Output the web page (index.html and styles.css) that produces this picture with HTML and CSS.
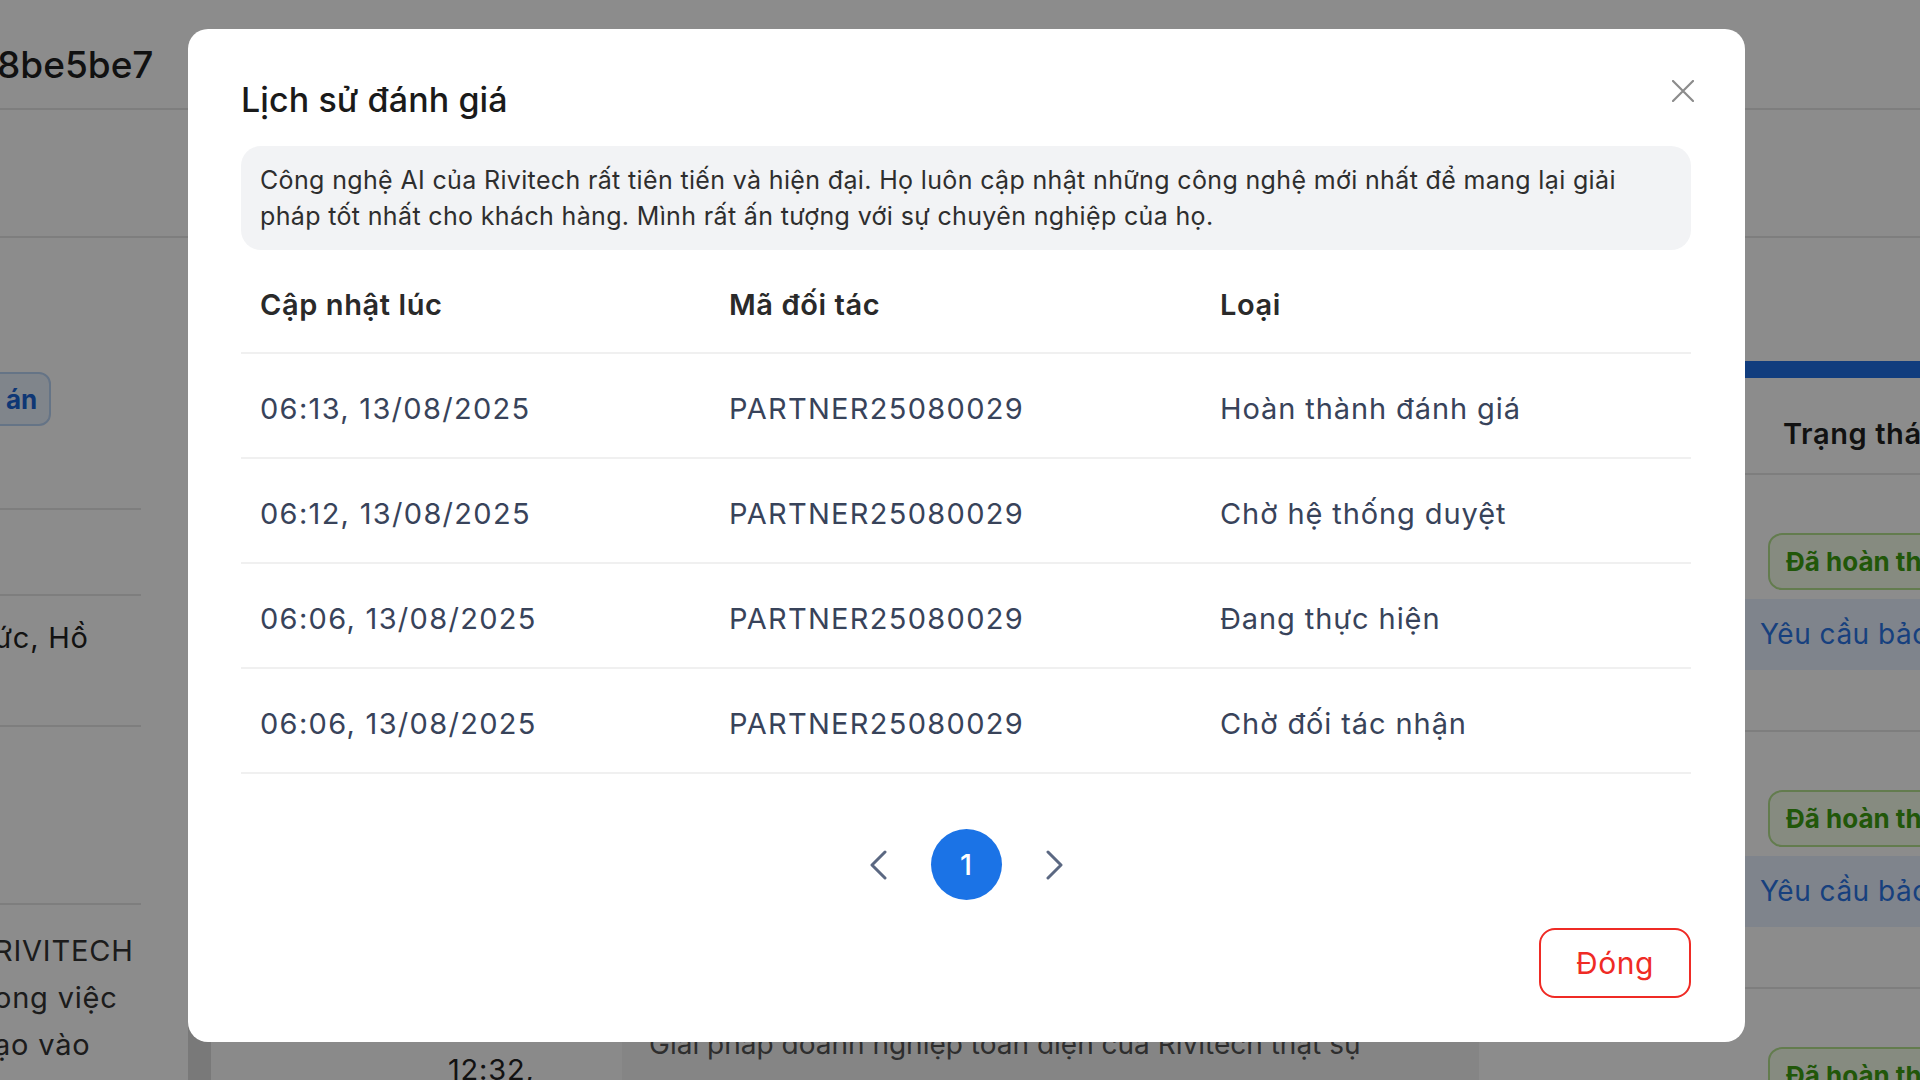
FILE: index.html
```html
<!DOCTYPE html>
<html lang="vi">
<head>
<meta charset="utf-8">
<title>Lịch sử đánh giá</title>
<link rel="stylesheet" href="styles.css">
</head>
<body>
<div class="page">
  <header class="topbar">
    <h1 class="order-id">8be5be7</h1>
  </header>
  <div class="subbar"></div>
  <div class="content">
    <aside class="left-panel">
      <div class="lp-row lp-row-1">
        <span class="pay-btn">án</span>
      </div>
      <div class="lp-row lp-row-2"></div>
      <div class="lp-row lp-row-3">ức, Hồ</div>
      <div class="lp-row lp-row-4"></div>
      <div class="lp-row lp-row-5">
        <p>RIVITECH</p>
        <p>ong việc</p>
        <p>ạo vào</p>
        <p>ược và</p>
      </div>
    </aside>
    <main class="main-card">
      <div class="mc-body"></div>
      <div class="mc-row">
        <div class="mc-edge"></div>
        <div class="mc-time">12:32,</div>
        <div class="mc-comment">Giải pháp doanh nghiệp toàn diện của Rivitech thật sự</div>
        <div class="mc-rest"></div>
      </div>
    </main>
    <aside class="right-panel">
      <div class="rp-tabbar"></div>
      <div class="rp-head">Trạng thái</div>
      <div class="rp-row">
        <span class="tag-done">Đã hoàn thành</span>
        <div class="rp-link">Yêu cầu bảo hành</div>
      </div>
      <div class="rp-row">
        <span class="tag-done">Đã hoàn thành</span>
        <div class="rp-link">Yêu cầu bảo hành</div>
      </div>
      <div class="rp-row">
        <span class="tag-done">Đã hoàn thành</span>
      </div>
    </aside>
  </div>
</div>

<div class="overlay">
  <section class="modal" role="dialog" aria-label="Lịch sử đánh giá">
    <button class="close-btn" aria-label="Đóng">
      <svg viewBox="0 0 22 22" width="22" height="22"><path d="M1 1 L21 21 M21 1 L1 21" stroke="#8c8c8c" stroke-width="2.2" fill="none" stroke-linecap="round"/></svg>
    </button>
    <h2 class="modal-title">Lịch sử đánh giá</h2>
    <div class="review-box">Công nghệ AI của Rivitech rất tiên tiến và hiện đại. Họ luôn cập nhật những công nghệ mới nhất để mang lại giải pháp tốt nhất cho khách hàng. Mình rất ấn tượng với sự chuyên nghiệp của họ.</div>
    <div class="history-table">
      <div class="t-row t-head">
        <div class="t-cell">Cập nhật lúc</div>
        <div class="t-cell">Mã đối tác</div>
        <div class="t-cell">Loại</div>
      </div>
      <div class="t-row">
        <div class="t-cell">06:13, 13/08/2025</div>
        <div class="t-cell">PARTNER25080029</div>
        <div class="t-cell">Hoàn thành đánh giá</div>
      </div>
      <div class="t-row">
        <div class="t-cell">06:12, 13/08/2025</div>
        <div class="t-cell">PARTNER25080029</div>
        <div class="t-cell">Chờ hệ thống duyệt</div>
      </div>
      <div class="t-row">
        <div class="t-cell">06:06, 13/08/2025</div>
        <div class="t-cell">PARTNER25080029</div>
        <div class="t-cell">Đang thực hiện</div>
      </div>
      <div class="t-row">
        <div class="t-cell">06:06, 13/08/2025</div>
        <div class="t-cell">PARTNER25080029</div>
        <div class="t-cell">Chờ đối tác nhận</div>
      </div>
    </div>
    <nav class="pager">
      <button class="pg-arrow" aria-label="Trang trước">
        <svg viewBox="0 0 18 30" width="18" height="30"><path d="M16 2 L3 15 L16 28" stroke="#5b6882" stroke-width="3" fill="none" stroke-linecap="round" stroke-linejoin="round"/></svg>
      </button>
      <span class="pg-current">1</span>
      <button class="pg-arrow" aria-label="Trang sau">
        <svg viewBox="0 0 18 30" width="18" height="30"><path d="M2 2 L15 15 L2 28" stroke="#5b6882" stroke-width="3" fill="none" stroke-linecap="round" stroke-linejoin="round"/></svg>
      </button>
    </nav>
    <div class="modal-footer">
      <button class="btn-close-red">Đóng</button>
    </div>
  </section>
</div>
</body>
</html>
```

FILE: styles.css
```css
* { box-sizing: border-box; }

html, body {
  margin: 0;
  padding: 0;
  width: 1920px;
  height: 1080px;
  overflow: hidden;
  background: #ffffff;
  font-family: "Inter", "Noto Sans", sans-serif;
  color: #222;
}

button { font-family: inherit; }

/* ---------- background page ---------- */
.page {
  width: 1920px;
  height: 1080px;
  overflow: hidden;
}

.topbar {
  height: 110px;
  border-bottom: 2px solid #e6e6e6;
  display: flex;
  align-items: flex-start;
}

.order-id {
  margin: 0 0 0 -3px;
  padding-top: 43px;
  font-size: 37px;
  line-height: 44px;
  font-weight: 500;
  color: #1f1f1f;
  letter-spacing: 0;
}

.subbar {
  height: 128px;
  border-bottom: 2px solid #e6e6e6;
}

.content {
  display: grid;
  grid-template-columns: 141px 49px 1510px 220px;
  height: 842px;
}

.left-panel {
  grid-column: 1;
  display: flex;
  flex-direction: column;
  overflow: hidden;
}

.lp-row { border-bottom: 2px solid #e6e6e6; flex-shrink: 0; }
.lp-row-1 { height: 272px; padding-top: 134px; }
.lp-row-2 { height: 86px; }
.lp-row-3 {
  height: 131px;
  padding-top: 24px;
  font-size: 29px;
  letter-spacing: 0.8px;
  color: #222;
  margin-left: -6px;
  white-space: nowrap;
}
.lp-row-4 { height: 178px; }
.lp-row-5 {
  border-bottom: none;
  padding-top: 22px;
  margin-left: -6px;
}
.lp-row-5 p {
  margin: 0;
  font-size: 29px;
  line-height: 47px;
  letter-spacing: 0.8px;
  color: #333;
  white-space: nowrap;
}

.pay-btn {
  display: inline-flex;
  align-items: center;
  height: 54px;
  margin-left: -30px;
  padding: 0 12px 0 34px;
  border: 2px solid #b9d3f5;
  border-radius: 12px;
  background: #eaf2fd;
  color: #1b64d6;
  font-size: 26px;
  font-weight: 700;
}

.main-card {
  grid-column: 3;
  display: flex;
  flex-direction: column;
}
.mc-body { flex: 1; }
.mc-row {
  display: flex;
  height: 84px;
  flex-shrink: 0;
  margin-left: -2px;
}
.mc-edge { width: 23px; background: #dcdcdc; }
.mc-time {
  width: 411px;
  background: #fbfbfb;
  font-size: 29px;
  letter-spacing: 0.8px;
  color: #222;
  padding: 56px 0 0 237px;
  white-space: nowrap;
}
.mc-comment {
  width: 857px;
  background: #f3f3f3;
  font-size: 28px;
  color: #555;
  padding: 32px 0 0 27px;
  line-height: 32px;
  white-space: nowrap;
  overflow: hidden;
}
.mc-rest { flex: 1; }

.right-panel {
  grid-column: 4;
  display: flex;
  flex-direction: column;
  overflow: hidden;
}
.rp-tabbar {
  margin-top: 123px;
  height: 17px;
  background: #1f6fe6;
  flex-shrink: 0;
}
.rp-head {
  height: 97px;
  flex-shrink: 0;
  border-bottom: 2px solid #e6e6e6;
  padding: 38px 0 0 83px;
  font-size: 29px;
  font-weight: 600;
  letter-spacing: 0.6px;
  color: #1f1f1f;
  white-space: nowrap;
}
.rp-row {
  height: 257px;
  flex-shrink: 0;
  border-bottom: 2px solid #e6e6e6;
  padding-top: 58px;
  display: flex;
  flex-direction: column;
  align-items: flex-start;
}
.tag-done {
  margin-left: 68px;
  height: 57px;
  padding: 0 16px;
  display: inline-flex;
  align-items: center;
  border: 2px solid #b5e28f;
  border-radius: 14px;
  background: #f4fdea;
  color: #3c9f12;
  font-size: 26px;
  font-weight: 700;
  white-space: nowrap;
}
.rp-link {
  margin-top: 9px;
  align-self: stretch;
  height: 71px;
  background: #e8f0ff;
  color: #2b76e6;
  font-size: 28px;
  letter-spacing: 0.5px;
  padding: 18px 0 0 60px;
  white-space: nowrap;
}

/* ---------- modal ---------- */
.overlay {
  position: fixed;
  inset: 0;
  background: rgba(0, 0, 0, 0.45);
  padding: 29px 0 0 188px;
}

.modal {
  position: relative;
  width: 1557px;
  height: 1013px;
  background: #ffffff;
  border-radius: 20px;
  padding: 51px 54px 45px 53px;
  display: flex;
  flex-direction: column;
}

.close-btn {
  position: absolute;
  top: 51px;
  right: 51px;
  width: 22px;
  height: 22px;
  padding: 0;
  border: none;
  background: none;
  display: flex;
}

.modal-title {
  margin: 0;
  height: 40px;
  line-height: 40px;
  font-size: 34px;
  font-weight: 500;
  color: #1a1a1a;
  letter-spacing: 0.1px;
}

.review-box {
  margin-top: 26px;
  height: 105px;
  background: #f2f3f5;
  border-radius: 20px;
  padding: 16px 36px 16px 19px;
  font-size: 25px;
  line-height: 36px;
  color: #2e2e2e;
  letter-spacing: 0.35px;
}

.history-table {
  display: flex;
  flex-direction: column;
}
.t-row {
  display: grid;
  grid-template-columns: 469px 491px 1fr;
  height: 105px;
  align-items: center;
  border-bottom: 2px solid #f0f0f0;
}
.t-row.t-head { height: 104px; }
.t-cell {
  padding-left: 19px;
  padding-top: 6px;
  font-size: 29px;
  letter-spacing: 1.3px;
  color: #38435a;
  white-space: nowrap;
}
.t-cell:nth-child(3) { letter-spacing: 0.9px; }
.t-head .t-cell {
  font-weight: 600;
  color: #2a2a2a;
  letter-spacing: 0.6px;
}

.pager {
  margin-top: 55px;
  display: flex;
  justify-content: center;
  align-items: center;
  gap: 44px;
  height: 71px;
}
.pg-arrow {
  width: 18px;
  height: 30px;
  padding: 0;
  border: none;
  background: none;
  display: flex;
}
.pg-current {
  width: 71px;
  height: 71px;
  border-radius: 50%;
  background: #1b73e6;
  color: #ffffff;
  font-size: 29px;
  font-weight: 500;
  display: flex;
  align-items: center;
  justify-content: center;
}

.modal-footer {
  margin-top: 28px;
  display: flex;
  justify-content: flex-end;
}
.btn-close-red {
  width: 152px;
  height: 70px;
  border: 2px solid #ef2b25;
  border-radius: 16px;
  background: #ffffff;
  color: #ef2b25;
  font-size: 30px;
  letter-spacing: 0.6px;
  font-weight: 400;
  padding: 0;
}
```
